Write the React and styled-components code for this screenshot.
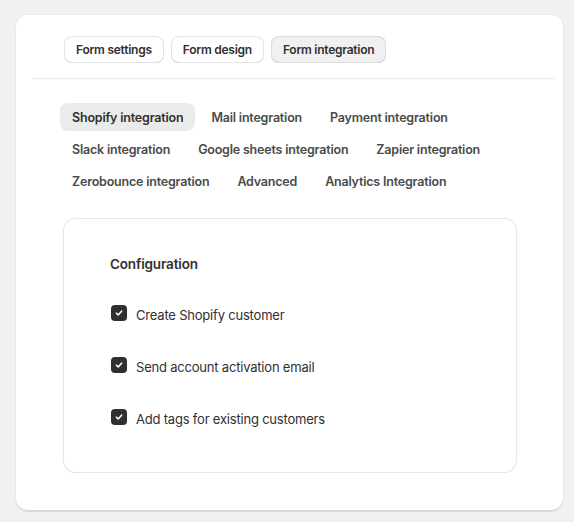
import React from "react";
import styled, { createGlobalStyle } from "styled-components";

const Global = createGlobalStyle`
  html, body { margin: 0; padding: 0; background: #f1f1f1; }
  body { font-family: Inter, "Noto Sans", sans-serif; color: #303030; -webkit-font-smoothing: antialiased; }
  * { box-sizing: border-box; }
`;

const Page = styled.div`
  padding: 15px 11px 11px 16px;
`;

const Card = styled.div`
  width: 547px;
  height: 496px;
  background: #fff;
  border-radius: 12px;
  box-shadow: 0 1px 0 0 rgba(26, 26, 26, 0.07), 0 0 0 1px rgba(0,0,0,0.03), inset 0 -1px 0 0 #d8d8d8;
  padding: 21px 0 0;
  display: flex;
  flex-direction: column;
`;

const Header = styled.div`
  margin: 0 8px 0 16px;
  padding: 0 0 15px 32px;
  border-bottom: 1px solid #ebebeb;
  display: flex;
  gap: 7px;
`;

const Button = styled.button`
  font-family: inherit;
  font-size: 12px;
  letter-spacing: -0.25px;
  font-weight: 600;
  color: #303030;
  height: 27px;
  padding: 0 12px;
  border-radius: 8px;
  border: none;
  background: ${p => (p.$active ? "#f0f0f0" : "#fff")};
  box-shadow: ${p =>
    p.$active
      ? "inset 0 0 0 1px #dcdcdc, inset 0 -1px 0 0 #c4c4c4"
      : "inset 0 0 0 1px #e3e3e3, inset 0 -1px 0 0 #c9c9c9"};
  cursor: pointer;
`;

const Body = styled.div`
  padding: 24px 47px 0 44px;
  display: flex;
  flex-direction: column;
`;

const Tabs = styled.div`
  display: flex;
  flex-direction: column;
  gap: 4px;
`;

const TabRow = styled.div`
  display: flex;
  gap: 4px;
`;

const Tab = styled.div`
  height: 28px;
  display: flex;
  align-items: center;
  padding: 0 12px;
  border-radius: 8px;
  font-size: 12.5px;
  letter-spacing: -0.2px;
  font-weight: 600;
  color: ${p => (p.$active ? "#303030" : "#4a4a4a")};
  background: ${p => (p.$active ? "#ebebeb" : "transparent")};
`;

const Panel = styled.div`
  margin: 24px 0 0 4px;
  width: 452px;
  height: 253px;
  border-radius: 12px;
  background: #fff;
  box-shadow: 0 0 0 1px #e6e6e6, 0 1px 0 0 #d4d4d4;
  padding: 35px 46px 0;
  display: flex;
  flex-direction: column;
`;

const Title = styled.div`
  font-size: 13.5px;
  letter-spacing: -0.15px;
  font-weight: 600;
  line-height: 20px;
  color: #303030;
  margin-bottom: 31px;
`;

const List = styled.div`
  display: flex;
  flex-direction: column;
  gap: 32px;
`;

const Row = styled.label`
  display: flex;
  align-items: center;
  gap: 9px;
  font-size: 13px;
  letter-spacing: -0.2px;
  line-height: 20px;
  color: #303030;
`;

const Box = styled.span`
  width: 16px;
  height: 16px;
  border-radius: 4px;
  background: #303030;
  display: flex;
  align-items: center;
  justify-content: center;
  margin-left: 1px;
  margin-top: -4px;
  flex: none;
`;

const Check = () => (
  <Box>
    <svg width="10" height="10" viewBox="0 0 10 10" fill="none">
      <path d="M2.4 5.2 L4.2 7 L7.6 3.2" stroke="#fff" strokeWidth="1.6" strokeLinecap="round" strokeLinejoin="round" />
    </svg>
  </Box>
);

const tabRows = [
  [["Shopify integration", true], ["Mail integration"], ["Payment integration"]],
  [["Slack integration"], ["Google sheets integration"], ["Zapier integration"]],
  [["Zerobounce integration"], ["Advanced"], ["Analytics Integration"]],
];

export default function App() {
  return (
    <>
      <Global />
      <Page>
        <Card>
          <Header>
            <Button>Form settings</Button>
            <Button>Form design</Button>
            <Button $active>Form integration</Button>
          </Header>
          <Body>
            <Tabs>
              {tabRows.map((r, i) => (
                <TabRow key={i}>
                  {r.map(([t, a]) => (
                    <Tab key={t} $active={a}>{t}</Tab>
                  ))}
                </TabRow>
              ))}
            </Tabs>
            <Panel>
              <Title>Configuration</Title>
              <List>
                <Row><Check />Create Shopify customer</Row>
                <Row><Check />Send account activation email</Row>
                <Row><Check />Add tags for existing customers</Row>
              </List>
            </Panel>
          </Body>
        </Card>
      </Page>
    </>
  );
}
